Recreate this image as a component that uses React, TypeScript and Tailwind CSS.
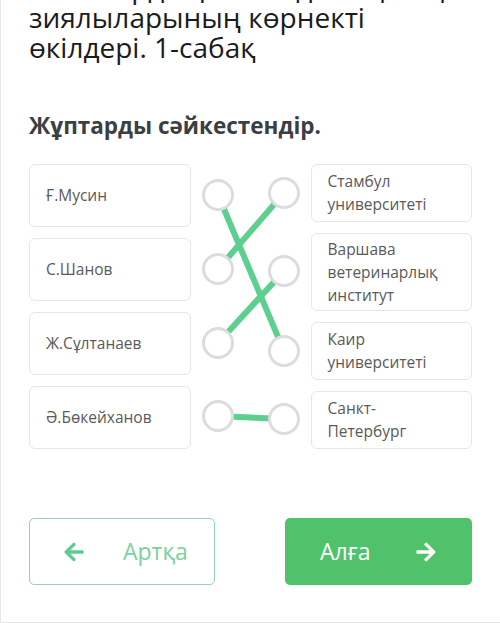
import { FaArrowLeft, FaArrowRight } from "react-icons/fa";

const leftItems = ["Ғ.Мусин", "С.Шанов", "Ж.Сұлтанаев", "Ә.Бөкейханов"];

const rightItems = [
  { text: "Стамбул университеті", h: "h-[58px]" },
  { text: "Варшава ветеринарлық институт", h: "h-[78px]" },
  { text: "Каир университеті", h: "h-[58px]" },
  { text: "Санкт-Петербург", h: "h-[58px]" },
];

// circle centres inside the 120px connector strip
const leftDots = [31, 105, 179, 252];
const rightDots = [29, 107, 187, 255];
const links: [number, number][] = [
  [0, 2],
  [1, 0],
  [2, 1],
  [3, 3],
];

function Connectors() {
  return (
    <svg width="120" height="284" viewBox="0 0 120 284" className="shrink-0">
      {links.map(([l, r]) => (
        <line
          key={`${l}-${r}`}
          x1={27}
          y1={leftDots[l]}
          x2={93}
          y2={rightDots[r]}
          stroke="#5dcf8e"
          strokeWidth={6}
        />
      ))}
      {leftDots.map((y) => (
        <circle key={`l${y}`} cx={27} cy={y} r={14.5} fill="#fff" stroke="#dcdcdc" strokeWidth={3} />
      ))}
      {rightDots.map((y) => (
        <circle key={`r${y}`} cx={93} cy={y} r={14.5} fill="#fff" stroke="#dcdcdc" strokeWidth={3} />
      ))}
    </svg>
  );
}

export default function App() {
  return (
    <div
      className="h-[623px] w-[500px] overflow-hidden bg-white border-l border-b border-[#e6e6e6]"
      style={{ fontFamily: '"Open Sans", "Noto Sans", sans-serif' }}
    >
      <div className="px-[28px]">
        <h1 className="mt-[-28px] text-[28px] leading-[30px] text-[#1b1b1b] font-normal">
          ХХ ғасырдың басындағы қазақ зиялыларының көрнекті өкілдері. 1-сабақ
        </h1>

        <h2 className="mt-[48px] text-[22.5px] leading-[32px] font-bold text-[#3b3f44]">
          Жұптарды сәйкестендір.
        </h2>

        <div className="mt-[22px] flex">
          <div className="flex w-[162px] flex-col gap-[11px]">
            {leftItems.map((t) => (
              <div
                key={t}
                className="flex h-[63px] items-center rounded-md border-[1.5px] border-[#e6e6e6] px-4 text-[15.5px] text-[#5a5a5a]"
              >
                {t}
              </div>
            ))}
          </div>

          <Connectors />

          <div className="flex w-[162px] flex-col gap-[11px]">
            {rightItems.map((it) => (
              <div
                key={it.text}
                className={`${it.h} flex items-center rounded-md border-[1.5px] border-[#e6e6e6] pl-4 pr-6 text-[15.5px] leading-[23px] text-[#5a5a5a]`}
              >
                {it.text}
              </div>
            ))}
          </div>
        </div>

        <div className="mt-[69px] flex justify-between">
          <button className="flex h-[67px] w-[186px] items-center rounded-[5px] border-[1.5px] border-[#92d4b6] pl-[33px] text-[23px] text-[#79d2a2]">
            <FaArrowLeft size={22} className="text-[#5dcb8b]" />
            <span className="ml-[38px]">Артқа</span>
          </button>
          <button className="flex h-[67px] w-[187px] items-center justify-between rounded-[5px] bg-[#50c26c] px-[35px] text-[23px] text-white">
            <span>Алға</span>
            <FaArrowRight size={22} />
          </button>
        </div>
      </div>
    </div>
  );
}
